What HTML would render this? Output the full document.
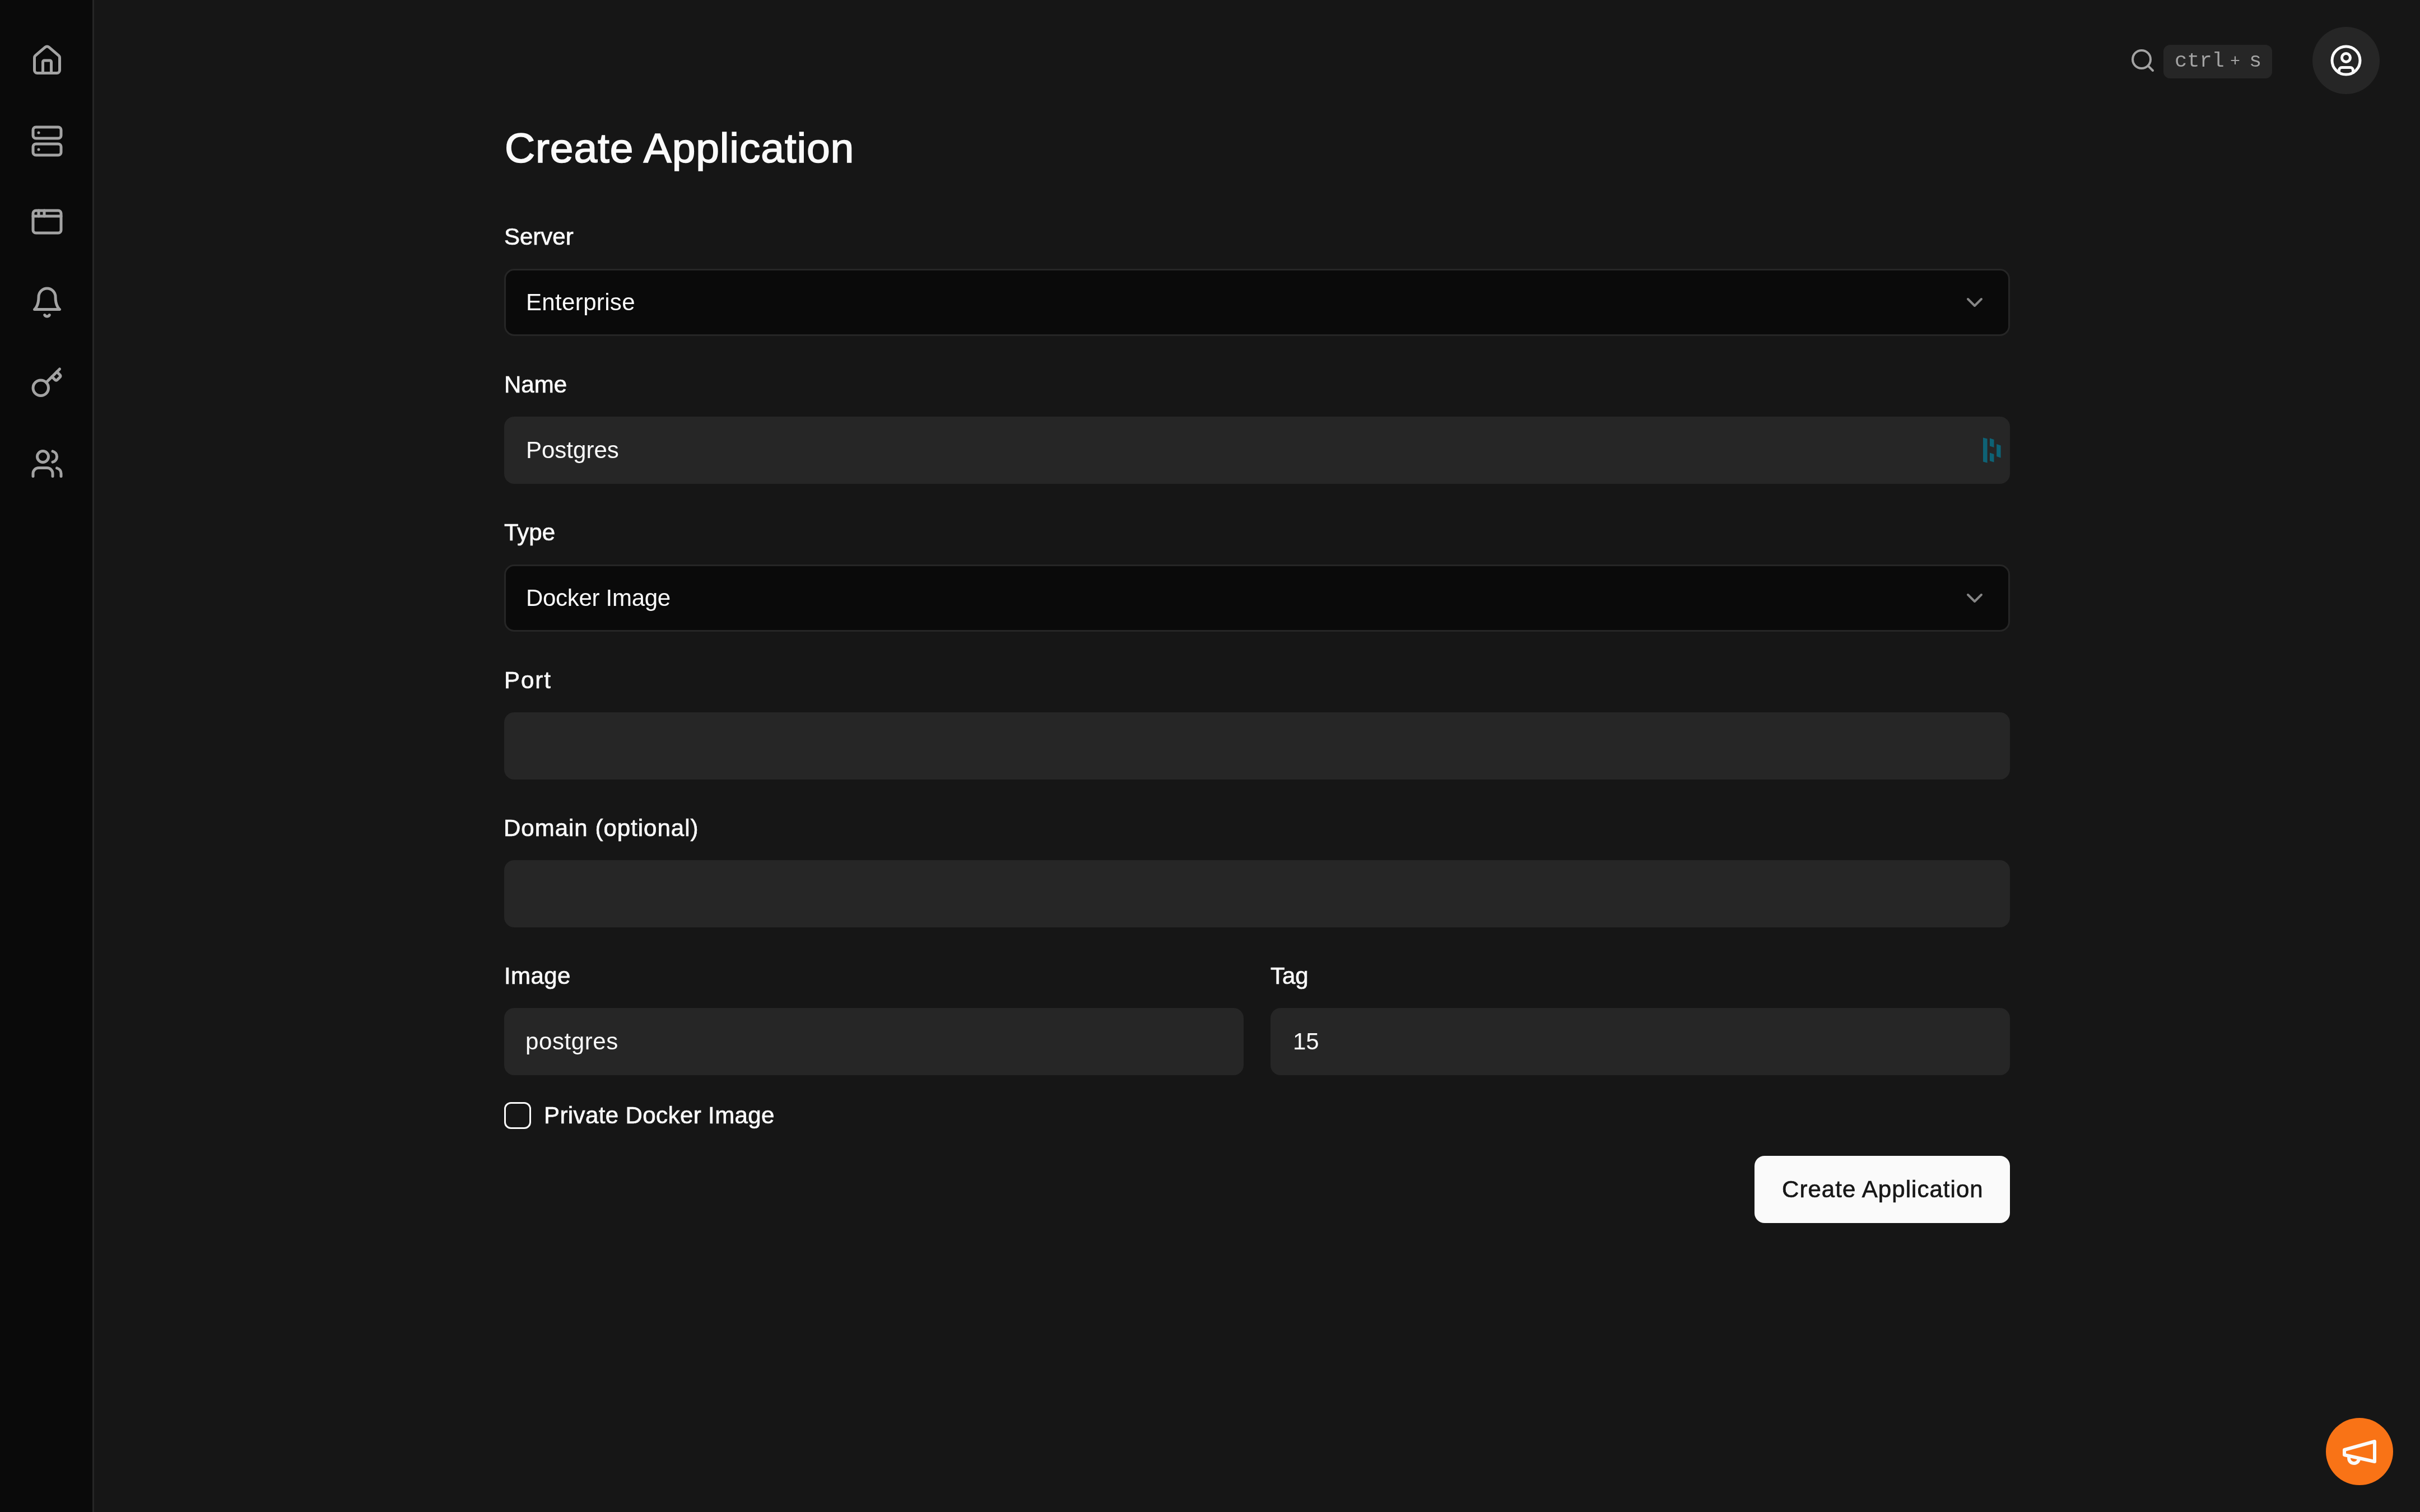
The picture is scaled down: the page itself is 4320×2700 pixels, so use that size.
<!DOCTYPE html>
<html>
<head>
<meta charset="utf-8">
<style>
html,body{margin:0;padding:0;}
body{width:4320px;height:2700px;background:#161616;position:relative;overflow:hidden;font-family:"Liberation Sans",sans-serif;color:#fafafa;}
@media (max-width:2000px){html{zoom:0.333333;}}
.a{position:absolute;}
.t{position:absolute;white-space:nowrap;font-size:42px;line-height:42px;will-change:transform;}
.lbl{color:#fafafa;-webkit-text-stroke:0.7px #fafafa;}
.val{color:#fafafa;}
.side{left:0;top:0;width:165px;height:2700px;background:#0a0a0a;border-right:3px solid #262626;}
.ico{position:absolute;left:54px;width:60px;height:60px;}
.sel{left:900px;width:2682px;height:114px;background:#0a0a0a;border:3px solid #262626;border-radius:18px;}
.inp{height:120px;background:#262626;border-radius:18px;}
</style>
</head>
<body>
<!-- sidebar -->
<div class="a side"></div>
<svg class="ico" style="top:78px" viewBox="0 0 24 24" fill="none" stroke="#a3a3a3" stroke-width="2" stroke-linecap="round" stroke-linejoin="round"><path d="M15 21v-8a1 1 0 0 0-1-1h-4a1 1 0 0 0-1 1v8"/><path d="M3 10a2 2 0 0 1 .709-1.528l7-5.999a2 2 0 0 1 2.582 0l7 5.999A2 2 0 0 1 21 10v9a2 2 0 0 1-2 2H5a2 2 0 0 1-2-2z"/></svg>
<svg class="ico" style="top:222px" viewBox="0 0 24 24" fill="none" stroke="#a3a3a3" stroke-width="2" stroke-linecap="round" stroke-linejoin="round"><rect width="20" height="8" x="2" y="2" rx="2" ry="2"/><rect width="20" height="8" x="2" y="14" rx="2" ry="2"/><line x1="6" x2="6.01" y1="6" y2="6"/><line x1="6" x2="6.01" y1="18" y2="18"/></svg>
<svg class="ico" style="top:366px" viewBox="0 0 24 24" fill="none" stroke="#a3a3a3" stroke-width="2" stroke-linecap="round" stroke-linejoin="round"><rect x="2" y="4" width="20" height="16" rx="2"/><path d="M10 4v4"/><path d="M2 8h20"/><path d="M6 4v4"/></svg>
<svg class="ico" style="top:510px" viewBox="0 0 24 24" fill="none" stroke="#a3a3a3" stroke-width="2" stroke-linecap="round" stroke-linejoin="round"><path d="M6 8a6 6 0 0 1 12 0c0 7 3 9 3 9H3s3-2 3-9"/><path d="M10.3 21a1.94 1.94 0 0 0 3.4 0"/></svg>
<svg class="ico" style="top:654px" viewBox="0 0 24 24" fill="none" stroke="#a3a3a3" stroke-width="2" stroke-linecap="round" stroke-linejoin="round"><path d="m15.5 7.5 2.3 2.3a1 1 0 0 0 1.4 0l2.1-2.1a1 1 0 0 0 0-1.4L19 4"/><path d="m21 2-9.6 9.6"/><circle cx="7.5" cy="15.5" r="5.5"/></svg>
<svg class="ico" style="top:798px" viewBox="0 0 24 24" fill="none" stroke="#a3a3a3" stroke-width="2" stroke-linecap="round" stroke-linejoin="round"><path d="M16 21v-2a4 4 0 0 0-4-4H6a4 4 0 0 0-4 4v2"/><circle cx="9" cy="7" r="4"/><path d="M22 21v-2a4 4 0 0 0-3-3.87"/><path d="M16 3.13a4 4 0 0 1 0 7.75"/></svg>

<!-- top right -->
<svg class="a" style="left:3801px;top:84px;width:48px;height:48px" viewBox="0 0 24 24" fill="none" stroke="#a3a3a3" stroke-width="2" stroke-linecap="round" stroke-linejoin="round"><circle cx="11" cy="11" r="8"/><path d="m21 21-4.3-4.3"/></svg>
<div class="a" style="left:3862px;top:80px;width:194px;height:60px;background:#262626;border-radius:12px;"></div>
<div class="t" style="left:3882px;top:91px;font-family:'Liberation Mono',monospace;font-size:37px;line-height:37px;color:#a3a3a3">ctrl</div>
<div class="t" style="left:3981px;top:95px;font-family:'Liberation Mono',monospace;font-size:30px;line-height:30px;color:#a3a3a3">+</div>
<div class="t" style="left:4015px;top:91px;font-family:'Liberation Mono',monospace;font-size:37px;line-height:37px;color:#a3a3a3">s</div>
<div class="a" style="left:4128px;top:48px;width:120px;height:120px;background:#262626;border-radius:60px;"></div>
<svg class="a" style="left:4158px;top:78px;width:60px;height:60px" viewBox="0 0 24 24" fill="none" stroke="#fafafa" stroke-width="2" stroke-linecap="round" stroke-linejoin="round"><circle cx="12" cy="12" r="10"/><circle cx="12" cy="10" r="3"/><path d="M7 20.662V19a2 2 0 0 1 2-2h6a2 2 0 0 1 2 2v1.662"/></svg>

<!-- title -->
<div class="t" style="left:901px;top:227px;font-size:75px;line-height:75px;letter-spacing:0.85px;-webkit-text-stroke:1.6px #fafafa">Create Application</div>

<!-- Server -->
<div class="t lbl" style="left:900px;top:402px">Server</div>
<div class="a sel" style="top:480px"></div>
<div class="t val" style="left:939px;top:519px;letter-spacing:0.35px">Enterprise</div>
<svg class="a" style="left:3501px;top:516px;width:48px;height:48px" viewBox="0 0 24 24" fill="none" stroke="#868686" stroke-width="2" stroke-linecap="round" stroke-linejoin="round"><path d="m6 9 6 6 6-6"/></svg>

<!-- Name -->
<div class="t lbl" style="left:900px;top:666px">Name</div>
<div class="a inp" style="left:900px;top:744px;width:2688px"></div>
<div class="t val" style="left:939px;top:783px">Postgres</div>
<svg class="a" style="left:3535px;top:776px;width:42px;height:56px" viewBox="3535 776 42 56" fill="#0e6275"><polygon points="3540,781.5 3547.6,783.5 3547.6,826.5 3540,824.5"/><polygon points="3552,782.5 3559.5,785 3559.5,799 3552,796.5"/><polygon points="3552,808.5 3559.5,811 3559.5,825.5 3552,823"/><polygon points="3564.2,793 3571.6,795.5 3571.6,817.5 3564.2,815"/></svg>

<!-- Type -->
<div class="t lbl" style="left:900px;top:930px">Type</div>
<div class="a sel" style="top:1008px"></div>
<div class="t val" style="left:939px;top:1047px;letter-spacing:-0.3px">Docker Image</div>
<svg class="a" style="left:3501px;top:1044px;width:48px;height:48px" viewBox="0 0 24 24" fill="none" stroke="#868686" stroke-width="2" stroke-linecap="round" stroke-linejoin="round"><path d="m6 9 6 6 6-6"/></svg>

<!-- Port -->
<div class="t lbl" style="left:900px;top:1194px;letter-spacing:2px">Port</div>
<div class="a inp" style="left:900px;top:1272px;width:2688px"></div>

<!-- Domain -->
<div class="t lbl" style="left:899px;top:1458px;letter-spacing:1px">Domain (optional)</div>
<div class="a inp" style="left:900px;top:1536px;width:2688px"></div>

<!-- Image / Tag -->
<div class="t lbl" style="left:900px;top:1722px;letter-spacing:0.4px">Image</div>
<div class="a inp" style="left:900px;top:1800px;width:1320px"></div>
<div class="t val" style="left:938px;top:1839px;letter-spacing:0.6px">postgres</div>
<div class="t lbl" style="left:2268px;top:1722px">Tag</div>
<div class="a inp" style="left:2268px;top:1800px;width:1320px"></div>
<div class="t val" style="left:2308px;top:1839px">15</div>

<!-- checkbox -->
<div class="a" style="left:900px;top:1968px;width:42px;height:42px;border:3px solid #fafafa;border-radius:12px;"></div>
<div class="t lbl" style="left:971px;top:1971px;letter-spacing:0.4px">Private Docker Image</div>

<!-- button -->
<div class="a" style="left:3132px;top:2064px;width:456px;height:120px;background:#fafafa;border-radius:18px;"></div>
<div class="t" style="left:3181px;top:2103px;color:#171717;letter-spacing:1.05px;-webkit-text-stroke:0.7px #171717">Create Application</div>

<!-- fab -->
<div class="a" style="left:4152px;top:2532px;width:120px;height:120px;background:#f97316;border-radius:60px;"></div>
<svg class="a" style="left:4176px;top:2556px;width:72px;height:72px" viewBox="0 0 24 24" fill="none" stroke="#fafafa" stroke-width="2" stroke-linecap="round" stroke-linejoin="round"><path d="m3 11 18-5v12L3 14v-3z"/><path d="M11.6 16.8a3 3 0 1 1-5.8-1.6"/></svg>
</body>
</html>
